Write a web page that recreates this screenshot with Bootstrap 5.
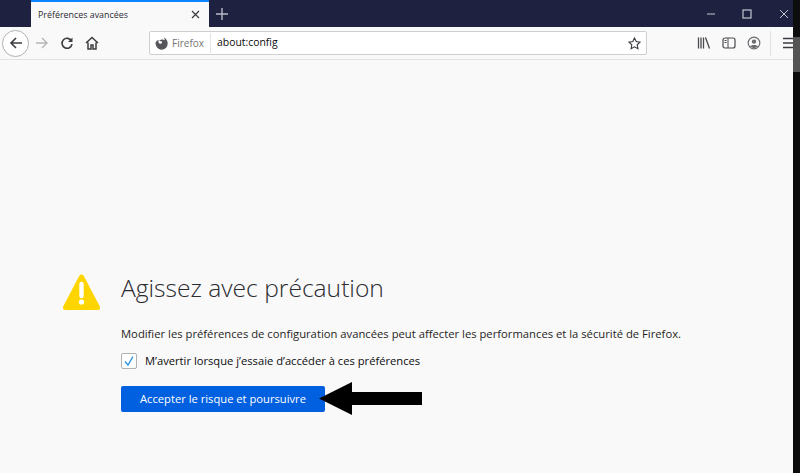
<!DOCTYPE html>
<html lang="fr">
<head>
    <meta charset="UTF-8">
    <title>Préférences avancées</title>
    <link href="https://cdn.jsdelivr.net/npm/bootstrap@5.3.3/dist/css/bootstrap.min.css" rel="stylesheet">
    <style>
        html, body { height: 473px; overflow: hidden; }
        body { background: #0d0d0d; font-family: "Open Sans", "Liberation Sans", sans-serif; color: #0c0c0d; }
        .shell { height: 473px; width: 793px; flex: none; background: #f9f9fa; }
        .edge-strip { width: 7px; height: 35px; margin-top: 37px; background: #555; }
        .tabs-bar { height: 27px; background: #1e2140; }
        .tab-spacer { width: 31px; }
        .tab-item { width: 178px; background: #f9f9fa; border-top: 2px solid #0a84ff; padding: 0 9px 0 7px; font-size: 8.9px; color: #2b2b30; }
        .tab-new { width: 26px; color: #b9bac6; }
        .win-btn { width: 36px; }
        .win-close { width: 28px; padding-left: 14px; }
        .tool-bar { height: 33px; background: #f9f9fa; border-bottom: 1px solid #e2e2e4; padding-left: 2px; }
        .ico-btn { width: 25px; height: 25px; flex: none; }
        .back-btn { width: 27px; height: 27px; border: 1px solid #b1b1b3; border-radius: 50%; background: #fff; }
        .url-box { width: 498px; height: 24px; background: #fff; border: 1px solid #cfcfd1; border-radius: 2px; margin-left: 45px; margin-right: 44px; padding: 0 5px; font-size: 10.4px; }
        .url-origin { color: #737373; padding-right: 6px; margin-right: 6px; border-right: 1px solid #e4e4e5; line-height: 20px; font-size: 10px; }
        .menu-btn { width: 23px; border-left: 1px solid #e2e2e4; }
        .warn-area { padding-top: 211px; padding-left: 63px; }
        .warn-icon { width: 37px; height: 37px; flex: none; margin-right: 21px; margin-top: 2px; }
        .warn-title { font-size: 24.6px; font-weight: 300; color: #2b2b30; line-height: 34px; margin: 0 0 21px; }
        .warn-text { font-size: 11.25px; line-height: 16px; margin: 0 0 11px; color: #1f1f22; }
        .warn-check { font-size: 11.2px; line-height: 16px; margin-bottom: 16px; }
        .fake-check { width: 16px; height: 16px; background: #fff; border: 1px solid #b1b1b3; border-radius: 2px; margin-right: 8px; }
        .accept-btn { width: 204px; height: 26px; padding: 0; background: #0060df; border: 0; border-radius: 2px; color: #fff; font-size: 11.2px; line-height: 26px; }
        .big-arrow { position: absolute; left: 319px; top: 382px; }
    </style>
</head>
<body class="d-flex">
    <div class="shell">
        <div class="tabs-bar d-flex">
            <div class="tab-spacer"></div>
            <div class="tab-item d-flex align-items-center justify-content-between">
                <span>Préférences avancées</span>
                <svg width="9" height="9" viewBox="0 0 9 9"><path d="M1 1l7 7M8 1l-7 7" stroke="#3a3a3e" stroke-width="1.2"/></svg>
            </div>
            <div class="tab-new d-flex align-items-center justify-content-center">
                <svg width="12" height="12" viewBox="0 0 12 12"><path d="M6 0v12M0 6h12" stroke="#b9bac6" stroke-width="1.4"/></svg>
            </div>
            <div class="ms-auto d-flex">
                <div class="win-btn d-flex align-items-center justify-content-center">
                    <svg width="10" height="10" viewBox="0 0 10 10"><path d="M1 5h8" stroke="#a9abb8" stroke-width="1.2"/></svg>
                </div>
                <div class="win-btn d-flex align-items-center justify-content-center">
                    <svg width="10" height="10" viewBox="0 0 10 10"><rect x="1" y="1" width="8" height="8" fill="none" stroke="#c4c5d0" stroke-width="1.2"/></svg>
                </div>
                <div class="win-close d-flex align-items-center">
                    <svg width="10" height="10" viewBox="0 0 10 10"><path d="M1 1l8 8M9 1l-8 8" stroke="#c4c5d0" stroke-width="1"/></svg>
                </div>
            </div>
        </div>

        <div class="tool-bar d-flex align-items-center">
            <div class="ico-btn back-btn d-flex align-items-center justify-content-center">
                <svg width="14" height="14" viewBox="0 0 14 14"><path d="M13 7H2M7 2L2 7l5 5" fill="none" stroke="#3c3c40" stroke-width="1.6"/></svg>
            </div>
            <div class="ico-btn d-flex align-items-center justify-content-center">
                <svg width="14" height="14" viewBox="0 0 14 14"><path d="M1 7h11M7 2l5 5-5 5" fill="none" stroke="#b5b5b7" stroke-width="1.4"/></svg>
            </div>
            <div class="ico-btn d-flex align-items-center justify-content-center">
                <svg width="14" height="14" viewBox="0 0 14 14"><path d="M11.5 5A5 5 0 1 0 12 8" fill="none" stroke="#3c3c40" stroke-width="1.6"/><path d="M12.5 1.5v4.5H8z" fill="#3c3c40"/></svg>
            </div>
            <div class="ico-btn d-flex align-items-center justify-content-center">
                <svg width="14" height="14" viewBox="0 0 14 14"><path d="M1 7l6-5.5L13 7M3 6.5V13h3V9h2v4h3V6.5" fill="none" stroke="#3c3c40" stroke-width="1.5"/></svg>
            </div>
            <div class="url-box d-flex align-items-center">
                <svg class="me-1" width="13" height="13" viewBox="0 0 13 13"><path d="M6.5 12.7A6.2 6.2 0 0 0 12.7 6.5C12.7 3.6 11 1.4 8.4.6c1 .8 1.5 1.7 1.5 2.6C8.9 2.6 7.9 2.3 6.8 2.4 5.6 2.5 4.8 3 4.3 3.7l2.6.9c.4.7.2 1.4-.6 1.9-1 .5-2 .1-2.5-.6-.5-.8-.4-1.9.1-2.9C2.6 3.3 1.5 4.2.6 5.3.2 9.3 3 12.7 6.5 12.7z" fill="#55555a"/></svg>
                <span class="url-origin">Firefox</span>
                <span>about:config</span>
                <svg class="ms-auto" width="13" height="13" viewBox="0 0 13 13"><path d="M6.5 1l1.7 3.6 3.8.5-2.8 2.7.7 3.9-3.4-1.9-3.4 1.9.7-3.9L1 5.1l3.8-.5z" fill="none" stroke="#3c3c40" stroke-width="1.1"/></svg>
            </div>
            <div class="ico-btn d-flex align-items-center justify-content-center">
                <svg width="14" height="14" viewBox="0 0 14 14"><path d="M1.5 1.5v11M4 1.5v11M6.5 1.5v11M8.5 1.5l4 11" fill="none" stroke="#4a4a4f" stroke-width="1.3"/></svg>
            </div>
            <div class="ico-btn d-flex align-items-center justify-content-center">
                <svg width="14" height="14" viewBox="0 0 14 14"><rect x="1" y="2" width="12" height="10" rx="2" fill="none" stroke="#4a4a4f" stroke-width="1.2"/><path d="M6 2v10" stroke="#4a4a4f"/><path d="M2.5 4.5h2M2.5 6.5h2" stroke="#4a4a4f"/></svg>
            </div>
            <div class="ico-btn d-flex align-items-center justify-content-center">
                <svg width="14" height="14" viewBox="0 0 14 14"><circle cx="7" cy="7" r="5.8" fill="none" stroke="#6a6a6f" stroke-width="1.2"/><circle cx="7" cy="5.6" r="2.2" fill="#6a6a6f"/><path d="M3 10.5c1-2 7-2 8 0L7 12.5z" fill="#6a6a6f"/></svg>
            </div>
            <div class="ico-btn menu-btn ms-auto d-flex align-items-center justify-content-end">
                <svg width="10" height="12" viewBox="0 0 10 12"><path d="M0 1.5h10M0 6h10M0 10.5h10" stroke="#3c3c40" stroke-width="1.5"/></svg>
            </div>
        </div>

        <div class="warn-area d-flex">
            <svg class="warn-icon" viewBox="0 0 37 37"><path d="M18.5 4L34.5 34.5H2.5z" fill="#ffd500" stroke="#ffd500" stroke-width="5" stroke-linejoin="round"/><path d="M18.5 11v12" stroke="#fff" stroke-width="4.4" stroke-linecap="round"/><circle cx="18.5" cy="29" r="2.6" fill="#fff"/></svg>
            <div>
                <h1 class="warn-title">Agissez avec précaution</h1>
                <p class="warn-text">Modifier les préférences de configuration avancées peut affecter les performances et la sécurité de Firefox.</p>
                <div class="warn-check d-flex align-items-center">
                    <span class="fake-check d-flex align-items-center justify-content-center">
                        <svg width="12" height="12" viewBox="0 0 12 12"><path d="M2 6.5l3 3.5 5-8.5" fill="none" stroke="#2f93e0" stroke-width="1.4"/></svg>
                    </span>
                    <span>M’avertir lorsque j’essaie d’accéder à ces préférences</span>
                </div>
                <button type="button" class="btn accept-btn">Accepter le risque et poursuivre</button>
            </div>
        </div>
    </div>
    <div class="edge-strip"></div>
    <svg class="big-arrow" width="103" height="33" viewBox="0 0 103 33"><path d="M0 16.5L33 0v10h70v13H33v10z" fill="#000"/></svg>
    <script src="https://cdn.jsdelivr.net/npm/bootstrap@5.3.3/dist/js/bootstrap.bundle.min.js"></script>
</body>
</html>
